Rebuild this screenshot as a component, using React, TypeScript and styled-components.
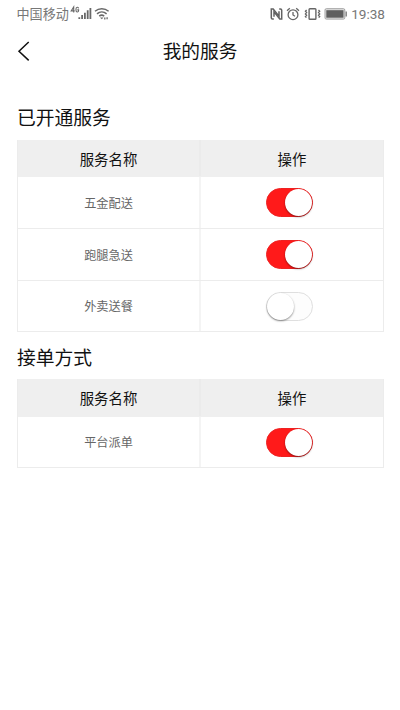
import React, { useState } from "react";
import styled, { createGlobalStyle } from "styled-components";

const GlobalStyle = createGlobalStyle`
  * { box-sizing: border-box; }
  body {
    margin: 0;
    background: #fff;
    color: #111;
    font-family: "Noto Sans CJK SC", sans-serif;
  }
`;

const Screen = styled.main`
  width: 400px;
  height: 710px;
  overflow: hidden;
  background: #fff;
`;

const StatusBar = styled.div`
  display: flex;
  align-items: center;
  justify-content: space-between;
  height: 28px;
  padding: 0 15px 0 16.5px;
  color: #777;
  font-size: 13.1px;
  line-height: 28px;
`;

const StatusGroup = styled.div`
  display: flex;
  align-items: center;
  height: 28px;
`;

const Clock = styled.span`
  font-family: Roboto, sans-serif;
  font-size: 13.6px;
`;

const NavBar = styled.header`
  display: grid;
  grid-template-columns: 60px 1fr 60px;
  align-items: center;
  height: 46px;
`;

const BackButton = styled.button`
  display: flex;
  align-items: center;
  height: 46px;
  padding: 0 0 0 17px;
  border: 0;
  background: none;
  color: #111;
`;

const PageTitle = styled.h1`
  margin: 0;
  text-align: center;
  font-size: 18.7px;
  font-weight: 400;
  line-height: 44px;
  height: 46px;
`;

const Content = styled.div`
  padding: 29px 16px 0 17px;
`;

const SectionTitle = styled.h2<{ $spaced?: boolean }>`
  height: ${(p) => (p.$spaced ? 47 : 37)}px;
  margin: 0;
  padding-top: ${(p) => (p.$spaced ? 11 : 0)}px;
  font-size: 18.8px;
  font-weight: 400;
  line-height: 28px;
`;

const Table = styled.div`
  border: solid #ececec;
  border-width: 0 1px;
`;

const Row = styled.div<{ $height: number; $head?: boolean }>`
  display: grid;
  grid-template-columns: 183px 1fr;
  height: ${(p) => p.$height}px;
  border-bottom: 1px solid ${(p) => (p.$head ? "#efefef" : "#ececec")};
  background: ${(p) => (p.$head ? "#efefef" : "#fff")};
  color: ${(p) => (p.$head ? "#111" : "#666")};
  font-size: ${(p) => (p.$head ? "14.4px" : "12.2px")};

  & > :first-child {
    border-right: 2px solid ${(p) => (p.$head ? "#ebebeb" : "#f4f4f4")};
  }
`;

const Cell = styled.div`
  display: flex;
  align-items: center;
  justify-content: center;
`;

const Switch = styled.button<{ $on: boolean }>`
  display: flex;
  justify-content: ${(p) => (p.$on ? "flex-end" : "flex-start")};
  width: 47px;
  height: 29px;
  margin-right: 6px;
  padding: 0;
  border: 1px solid ${(p) => (p.$on ? "#ee2222" : "#dfdfdf")};
  border-radius: 15px;
  background: ${(p) => (p.$on ? "#ff1a1a" : "#fdfdfd")};
`;

const Knob = styled.span`
  width: 27px;
  height: 27px;
  border-radius: 50%;
  background: #fff;
  box-shadow: 0 1px 2px rgba(0, 0, 0, 0.45);
`;

const SignalIcon = () => (
  <svg width="41" height="20" viewBox="0 0 41 20" fill="none" stroke="#686868">
    <path d="M4.7 8.5V3L2.2 6.9h3.5M9.6 4.4C9.4 2.8 7 2.8 7 5v1.2c0 2.4 2.6 2.4 2.6.4v-.7H8.3" strokeWidth="1.1" />
    <path d="M10.3 15v-1.8M13.1 15v-4M15.9 15V8.7M18.7 15V6.2M21.4 15V3.9" strokeWidth="1.8" />
    <path d="M26 7.3c4-3.4 9.6-3.4 13.6 0M28 9.9c2.8-2.4 6.8-2.4 9.6 0M30.2 12.1c1.6-1.2 3.5-1.2 5 0" strokeWidth="1.5" />
    <path d="m31 13.5 1.8 1.8 1.7-1.8" fill="#686868" stroke="none" />
    <path d="M35.8 15.4v-2M38.1 13.2v2" strokeWidth="1.3" />
  </svg>
);

const NfcIcon = () => (
  <svg width="13" height="14" viewBox="0 0 13 14" fill="none" stroke="#626262">
    <path d="M3.8 12.1H2.6Q1.3 12.1 1.3 10.8V1.9H3.2L9 9.3V4.3" strokeWidth="1.5" />
    <path d="M9.2 1.9h1.2q1.3 0 1.3 1.3v8.9H9.8L4 4.7v5" strokeWidth="1.5" />
  </svg>
);

const AlarmIcon = () => (
  <svg width="14" height="14" viewBox="0 0 14 14" fill="none" stroke="#666" strokeWidth="1.3">
    <circle cx="7" cy="7.7" r="4.9" />
    <path d="M7 5v3l2 1.2M1 3.8l2.8-2.5M13 3.8l-2.8-2.5" />
  </svg>
);

const VibrateIcon = () => (
  <svg width="17" height="14" viewBox="0 0 17 14" fill="none" stroke="#666">
    <rect x="5.1" y="1.7" width="6.8" height="10.6" rx=".8" strokeWidth="1.4" />
    <path d="m2.6 3-1.2 1.3 1.2 1.3-1.2 1.3 1.2 1.3-1.2 1.3 1 1.1M14.5 3l1.2 1.3-1.2 1.3 1.2 1.3-1.2 1.3 1.2 1.3-1 1.1" strokeWidth="1.3" />
  </svg>
);

const BatteryIcon = () => (
  <svg width="23" height="12" viewBox="0 0 23 12">
    <rect x="1" y=".7" width="19.8" height="10.4" rx="1.3" fill="#e0e0e0" stroke="#a2a2a2" />
    <rect x="2.3" y="2.2" width="17.2" height="7.5" fill="#5f5f5f" />
    <path d="M22.2 3.5v5" stroke="#777" strokeWidth="1.3" />
  </svg>
);

const IconTray = styled.div`
  display: grid;
  grid-template-columns: 13px 14px 17px 23px;
  column-gap: 3.5px;
  align-items: center;
  margin-right: 4px;
`;

interface Service {
  name: string;
  enabled: boolean;
  height: number;
}

const openedServices: Service[] = [
  { name: "五金配送", enabled: true, height: 52 },
  { name: "跑腿急送", enabled: true, height: 52 },
  { name: "外卖送餐", enabled: false, height: 51 },
];

const orderModes: Service[] = [{ name: "平台派单", enabled: true, height: 51 }];

function ServiceRow({ service }: { service: Service }) {
  const [on, setOn] = useState(service.enabled);
  return (
    <Row $height={service.height}>
      <Cell>{service.name}</Cell>
      <Cell>
        <Switch $on={on} role="switch" aria-checked={on} aria-label={service.name} onClick={() => setOn(!on)}>
          <Knob />
        </Switch>
      </Cell>
    </Row>
  );
}

function ServiceTable({ services, headHeight }: { services: Service[]; headHeight: number }) {
  return (
    <Table>
      <Row $head $height={headHeight}>
        <Cell>服务名称</Cell>
        <Cell>操作</Cell>
      </Row>
      {services.map((service) => (
        <ServiceRow key={service.name} service={service} />
      ))}
    </Table>
  );
}

export default function App() {
  return (
    <Screen>
      <GlobalStyle />
      <StatusBar>
        <StatusGroup>
          <span>中国移动</span>
          <SignalIcon />
        </StatusGroup>
        <StatusGroup>
          <IconTray>
            <NfcIcon />
            <AlarmIcon />
            <VibrateIcon />
            <BatteryIcon />
          </IconTray>
          <Clock>19:38</Clock>
        </StatusGroup>
      </StatusBar>
      <NavBar>
        <BackButton aria-label="返回">
          <svg width="14" height="20" viewBox="0 0 14 20" fill="none" stroke="currentColor" strokeWidth="1.5">
            <path d="M11.7 1 2 10.2l9.7 9.2" />
          </svg>
        </BackButton>
        <PageTitle>我的服务</PageTitle>
      </NavBar>
      <Content>
        <SectionTitle>已开通服务</SectionTitle>
        <ServiceTable services={openedServices} headHeight={37} />
        <SectionTitle $spaced>接单方式</SectionTitle>
        <ServiceTable services={orderModes} headHeight={38} />
      </Content>
    </Screen>
  );
}
